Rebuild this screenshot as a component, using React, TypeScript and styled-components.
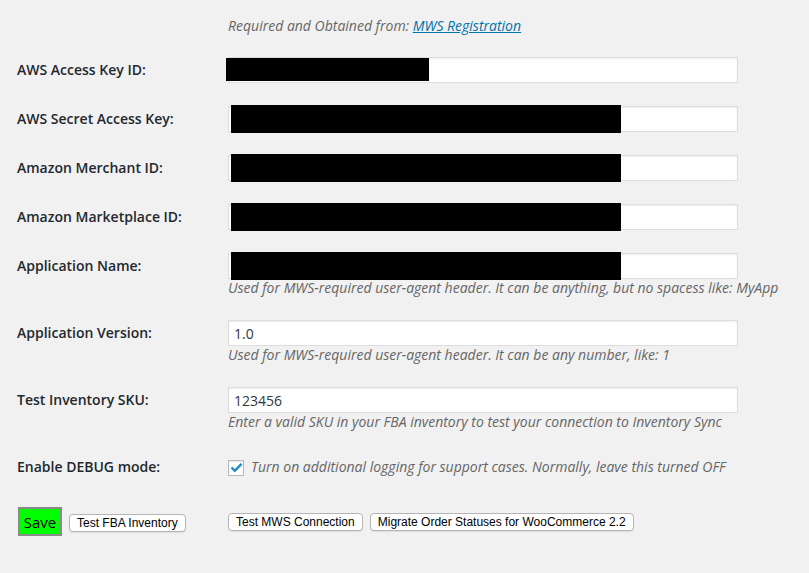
import React from 'react'
import styled, { createGlobalStyle } from 'styled-components'

const GlobalStyle = createGlobalStyle`
  html, body {
    margin: 0;
    padding: 0;
    background: #f1f1f1;
  }
  body {
    font-family: "Open Sans", "Liberation Sans", sans-serif;
    color: #23282d;
  }
`

const Page = styled.div`
  padding: 17px 0 0 17px;
  min-height: 556px;
`

const Row = styled.div<{ $gap?: number }>`
  display: grid;
  grid-template-columns: 211px 510px;
  align-items: start;
  margin-bottom: ${(p) => p.$gap ?? 23}px;
`

const Label = styled.label`
  font-size: 14px;
  font-weight: 600;
  line-height: 26px;
`

const Field = styled.div`
  display: flex;
  flex-direction: column;
`

const InputWrap = styled.div`
  position: relative;
  height: 26px;
`

const TextInput = styled.input`
  box-sizing: border-box;
  width: 510px;
  height: 26px;
  margin: 0;
  padding: 0 5px;
  border: 1px solid #ddd;
  box-shadow: inset 0 1px 2px rgba(0, 0, 0, 0.07);
  background: #fff;
  font-family: "Open Sans", "Liberation Sans", sans-serif;
  font-size: 14px;
  color: #32373c;
  outline: none;
`

const Redacted = styled.div<{ $short?: boolean }>`
  position: absolute;
  background: #000;
  left: ${(p) => (p.$short ? -2 : 3)}px;
  top: ${(p) => (p.$short ? 1 : -1)}px;
  width: ${(p) => (p.$short ? 203 : 390)}px;
  height: ${(p) => (p.$short ? 23 : 28)}px;
`

const Hint = styled.p`
  margin: 0;
  font-size: 14px;
  font-style: italic;
  line-height: 18px;
  color: #666;
  white-space: nowrap;
`

const Link = styled.a`
  color: #0073aa;
  text-decoration: underline;
`

const CheckLine = styled.div`
  display: flex;
  align-items: center;
  height: 26px;
  gap: 7px;
`

const CheckBox = styled.span`
  box-sizing: border-box;
  width: 16px;
  height: 16px;
  border: 1px solid #b4b9be;
  background: #fff;
  box-shadow: inset 0 1px 2px rgba(0, 0, 0, 0.1);
  display: flex;
  align-items: center;
  justify-content: center;
  margin-top: 1px;
`

const ButtonRow = styled.div`
  display: grid;
  grid-template-columns: 211px 510px;
  align-items: center;
`

const ButtonGroup = styled.div`
  display: flex;
  align-items: center;
  gap: 7px;
`

const SaveButton = styled.button`
  box-sizing: border-box;
  width: 44px;
  height: 29px;
  margin: 0 0 0 1px;
  padding: 0;
  background: #00ff00;
  border: 2px solid #8a8a8a;
  font-family: "Open Sans", "Liberation Sans", sans-serif;
  font-size: 15px;
  font-weight: 500;
  color: #000;
`

const PlainButton = styled.button<{ $drop?: number }>`
  box-sizing: border-box;
  height: 18px;
  margin: ${(p) => p.$drop ?? 0}px 0 0;
  padding: 0 7px;
  background: #fff;
  border: 1px solid #b5b5b5;
  border-radius: 4px;
  box-shadow: 0 1px 1px rgba(0, 0, 0, 0.08);
  font-family: "Liberation Sans", Arial, sans-serif;
  font-size: 12px;
  line-height: 16px;
  color: #000;
  white-space: nowrap;
`

type FieldDef = {
  label: string
  value?: string
  redact?: 'short' | 'long'
  help?: string
}

const fields: FieldDef[] = [
  { label: 'AWS Access Key ID:', redact: 'short' },
  { label: 'AWS Secret Access Key:', redact: 'long' },
  { label: 'Amazon Merchant ID:', redact: 'long' },
  { label: 'Amazon Marketplace ID:', redact: 'long' },
  {
    label: 'Application Name:',
    redact: 'long',
    help: 'Used for MWS-required user-agent header. It can be anything, but no spacess like: MyApp',
  },
  {
    label: 'Application Version:',
    value: '1.0',
    help: 'Used for MWS-required user-agent header. It can be any number, like: 1',
  },
  {
    label: 'Test Inventory SKU:',
    value: '123456',
    help: 'Enter a valid SKU in your FBA inventory to test your connection to Inventory Sync',
  },
]

const App = () => {
  return (
    <Page>
      <GlobalStyle />
      <Row $gap={22}>
        <span />
        <Hint>
          Required and Obtained from: <Link href="#">MWS Registration</Link>
        </Hint>
      </Row>
      {fields.map((f) => (
        <Row key={f.label}>
          <Label>{f.label}</Label>
          <Field>
            <InputWrap>
              <TextInput type="text" defaultValue={f.value ?? ''} />
              {f.redact && <Redacted $short={f.redact === 'short'} />}
            </InputWrap>
            {f.help && <Hint>{f.help}</Hint>}
          </Field>
        </Row>
      ))}
      <Row $gap={27}>
        <Label>Enable DEBUG mode:</Label>
        <CheckLine>
          <CheckBox>
            <svg width="13" height="11" viewBox="0 0 13 11">
              <path d="M1.5 5.5 L4.8 8.8 L11.5 1.8" fill="none" stroke="#1e8cbe" strokeWidth="2.4" />
            </svg>
          </CheckBox>
          <Hint>Turn on additional logging for support cases. Normally, leave this turned OFF</Hint>
        </CheckLine>
      </Row>
      <ButtonRow>
        <ButtonGroup>
          <SaveButton>Save</SaveButton>
          <PlainButton $drop={2}>Test FBA Inventory</PlainButton>
        </ButtonGroup>
        <ButtonGroup>
          <PlainButton>Test MWS Connection</PlainButton>
          <PlainButton>Migrate Order Statuses for WooCommerce 2.2</PlainButton>
        </ButtonGroup>
      </ButtonRow>
    </Page>
  )
}

export default App
